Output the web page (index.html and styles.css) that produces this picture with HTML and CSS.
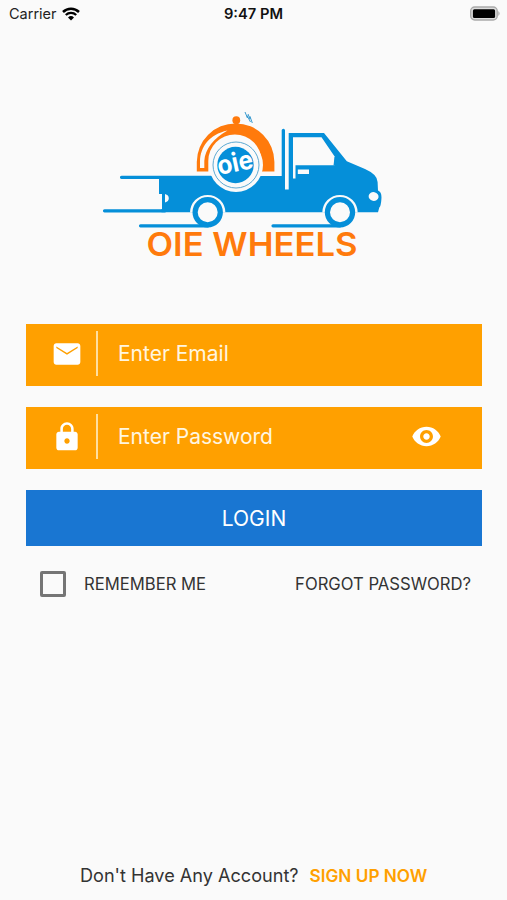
FILE: index.html
```html
<!DOCTYPE html>
<html>
<head>
    <meta charset="utf-8">
    <title>OIE Wheels</title>
    <link rel="stylesheet" href="styles.css">
</head>
<body>
    <div class="statusbar">
        <div class="carrier">
            <span>Carrier</span>
            <svg class="wifi" width="18" height="14" viewBox="0 0 18 14">
                <path d="M1 5 A11.5 11.5 0 0 1 17 5" fill="none" stroke="#000" stroke-width="2.5"/>
                <path d="M3.8 8 A7.5 7.5 0 0 1 14.2 8" fill="none" stroke="#000" stroke-width="2.3"/>
                <path d="M9 13.6 L6 10.5 A4.3 4.3 0 0 1 12 10.5 Z"/>
            </svg>
        </div>
        <span class="time">9:47 PM</span>
        <svg class="battery" width="32" height="16" viewBox="0 0 32 16">
            <rect x="1.700" y="1" width="26.500" height="13" rx="4" fill="#ddd" stroke="#aaa" stroke-width="1.400"/>
            <rect x="3.900" y="3.200" width="22.200" height="8.800" rx="1.500" fill="#000"/>
            <path d="M29.300 5 Q32 7.500 29.300 10 Z" fill="#aaa"/>
        </svg>
    </div>

    <div class="logo">
        <svg width="290" height="160" viewBox="100 105 290 160">
            <!-- serving dome -->
            <path d="M196.800 171.500 V162 A38.800 38.600 0 0 1 274.400 162 V171.500 H261.500 V161 A26.500 26.500 0 0 0 208.300 161 V171.500 Z" fill="#ff7a0c"/>
            <path d="M200 168 V161 C200.500 147 209 134.500 227.500 130.500 C214 138 205 149 204.300 161 V168 Z" fill="#fafafa"/>
            <circle cx="236.300" cy="120.200" r="3.900" fill="#ff7a0c"/>
            <path d="M245 112 L247.500 118 L247 115.500 L250.500 122 M248 114 L250 119 L250 116.500 L252.300 123" fill="none" stroke="#3a9bd0" stroke-width="1"/>
            <!-- truck body -->
            <path d="M121.500 177.300 H215 M104.500 210.800 H165 M140.500 225.800 H208 M273 225.800 H340" stroke="#058fd9" stroke-width="3.200" stroke-linecap="round"/>
            <path d="M159 176 H281.700 V130 Q283.400 127.500 285 130 V189.500 H288.700 V133 H324 L346.800 161.300 L365 169 Q377.500 174.500 377.600 182 L378 190.500 Q382 192 381.400 199 Q381 206 379.300 207.500 L378 212.300 H161.500 V194 H159 Z" fill="#058fd9"/>
            <path d="M293 137.300 H321.500 L334.800 156.700 V165.200 H295.500 V178.500 H293 Z" fill="#fafafa"/>
            <path d="M334.500 157 H337 V165.500 H333.500 Z" fill="#058fd9"/>
            <rect x="297.800" y="169.500" width="11.200" height="4.500" fill="#fafafa"/>
            <ellipse cx="373.600" cy="196.500" rx="5" ry="4.400" transform="rotate(12 373.600 196.500)" fill="#fafafa"/>
            <path d="M159 194 H162 V209 H159 Z M165 194 Q168.800 195 168.800 198.300 Q168.800 201.500 165 202.500 Z" fill="#fafafa"/>
            <path d="M190 212.600 A17.700 17.700 0 0 1 225.400 212.600 Z M322.300 212.600 A17.700 17.700 0 0 1 357.700 212.600 Z" fill="#fafafa"/>
            <circle cx="207.700" cy="212.200" r="12.600" fill="#fafafa" stroke="#058fd9" stroke-width="5.200"/>
            <circle cx="340" cy="212.200" r="12.600" fill="#fafafa" stroke="#058fd9" stroke-width="5.200"/>
            <!-- badge -->
            <circle cx="236" cy="165" r="27" fill="#fafafa"/>
            <circle cx="236" cy="165" r="23" fill="none" stroke="#4b9fcd" stroke-width="0.900"/>
            <circle cx="235.500" cy="165" r="18.200" fill="#058fd9"/>
            <text class="logo-oie" x="217.500" y="171.500" textLength="36" lengthAdjust="spacingAndGlyphs" transform="rotate(-12 235.500 165)">oie</text>
            <text class="logo-name" x="146.500" y="256.300" textLength="211" lengthAdjust="spacingAndGlyphs">OIE WHEELS</text>
        </svg>
    </div>

    <form class="login-form">
        <div class="field">
            <svg class="field-icon" width="32" height="32" viewBox="0 0 24 24">
                <path fill="#fff" d="M20 4H4c-1.100 0-2 .9-2 2v12c0 1.100.9 2 2 2h16c1.100 0 2-.9 2-2V6c0-1.100-.9-2-2-2zm0 3.500l-8 5-8-5V6.300l8 5 8-5v1.200z"/>
            </svg>
            <div class="divider"></div>
            <input type="text" placeholder="Enter Email">
        </div>
        <div class="field">
            <svg class="field-icon" width="32" height="32" viewBox="0 0 24 24">
                <path fill="#fff" d="M18 8h-1V6c0-2.760-2.240-5-5-5S7 3.240 7 6v2H6c-1.100 0-2 .9-2 2v10c0 1.100.9 2 2 2h12c1.100 0 2-.9 2-2V10c0-1.100-.9-2-2-2zm-6 9c-1.100 0-2-.9-2-2s.9-2 2-2 2 .9 2 2-.9 2-2 2zm3.100-9H8.900V6c0-1.710 1.390-3.100 3.100-3.100 1.710 0 3.100 1.390 3.100 3.100v2z"/>
            </svg>
            <div class="divider"></div>
            <input type="password" placeholder="Enter Password">
            <svg class="eye" width="31" height="31" viewBox="0 0 24 24">
                <path fill="#fff" d="M12 4.500C7 4.500 2.730 7.610 1 12c1.730 4.390 6 7.500 11 7.500s9.270-3.110 11-7.500c-1.730-4.390-6-7.500-11-7.500zM12 17c-2.760 0-5-2.240-5-5s2.240-5 5-5 5 2.240 5 5-2.240 5-5 5zm0-7.500c-1.380 0-2.500 1.120-2.500 2.500s1.120 2.500 2.500 2.500 2.500-1.120 2.500-2.500-1.120-2.500-2.500-2.500z"/>
            </svg>
        </div>
        <button type="button" class="login-button">LOGIN</button>
        <div class="options">
            <label class="remember">
                <input type="checkbox" class="checkbox">
                <span>REMEMBER ME</span>
            </label>
            <a class="forgot" href="#">FORGOT PASSWORD?</a>
        </div>
    </form>

    <div class="signup">
        <span>Don't Have Any Account?</span>
        <a href="#">SIGN UP NOW</a>
    </div>
</body>
</html>
```

FILE: styles.css
```css
* {
    box-sizing: border-box;
}

body {
    margin: 0;
    height: 900px;
    display: flex;
    flex-direction: column;
    background-color: #fafafa;
    color: #333;
    font-family: Inter, "Liberation Sans", sans-serif;
    overflow: hidden;
}

a {
    text-decoration: none;
    color: inherit;
}

.statusbar {
    height: 27px;
    padding: 0 6px 0 9px;
    display: grid;
    grid-template-columns: 1fr auto 1fr;
    align-items: center;
    font-size: 14.5px;
    color: #222;
}

.carrier {
    display: flex;
    align-items: center;
    gap: 5px;
}

.time {
    margin-right: 3px;
    font-weight: 600;
    font-size: 14.7px;
    color: #111;
}

.battery {
    justify-self: end;
}

.logo {
    height: 160px;
    margin: 78px 0 0 100px;
}

.logo svg {
    display: block;
}

.logo-oie {
    font-size: 26px;
    font-weight: 700;
    fill: #fff;
}

.logo-name {
    font-size: 33px;
    font-weight: 600;
    fill: #ff7a0c;
}

.login-form {
    margin: 59px 25px 0 26px;
    display: flex;
    flex-direction: column;
}

.field {
    height: 62px;
    margin-bottom: 21px;
    padding: 0 40px 3px 25px;
    display: flex;
    align-items: center;
    background-color: #ffa000;
}

.divider {
    width: 2px;
    height: 45px;
    margin: 0 20px 0 13px;
    background-color: #ffdf9f;
}

.field input {
    flex: 1;
    min-width: 0;
    padding: 0;
    border: none;
    outline: none;
    background: none;
    color: #fff;
    font-family: inherit;
    font-size: 21px;
}

.field input::placeholder {
    color: #fff6e0;
}

.login-button {
    height: 56px;
    padding: 0;
    border: none;
    background-color: #1976d2;
    color: #fff;
    font-family: inherit;
    font-size: 21px;
    cursor: pointer;
}

.options {
    height: 76px;
    padding: 0 11px 0 14px;
    display: flex;
    align-items: center;
    justify-content: space-between;
    font-size: 16.65px;
}

.remember {
    display: flex;
    align-items: center;
    gap: 18px;
}

.checkbox {
    appearance: none;
    width: 26px;
    height: 26px;
    margin: 0;
    border: 3px solid #757575;
    border-radius: 2px;
}

.signup {
    margin-top: auto;
    height: 50px;
    padding-left: 80px;
    display: flex;
    align-items: center;
    gap: 11px;
    font-size: 18.1px;
}

.signup a {
    color: #ffa000;
    font-size: 17.2px;
    font-weight: 600;
}
```
